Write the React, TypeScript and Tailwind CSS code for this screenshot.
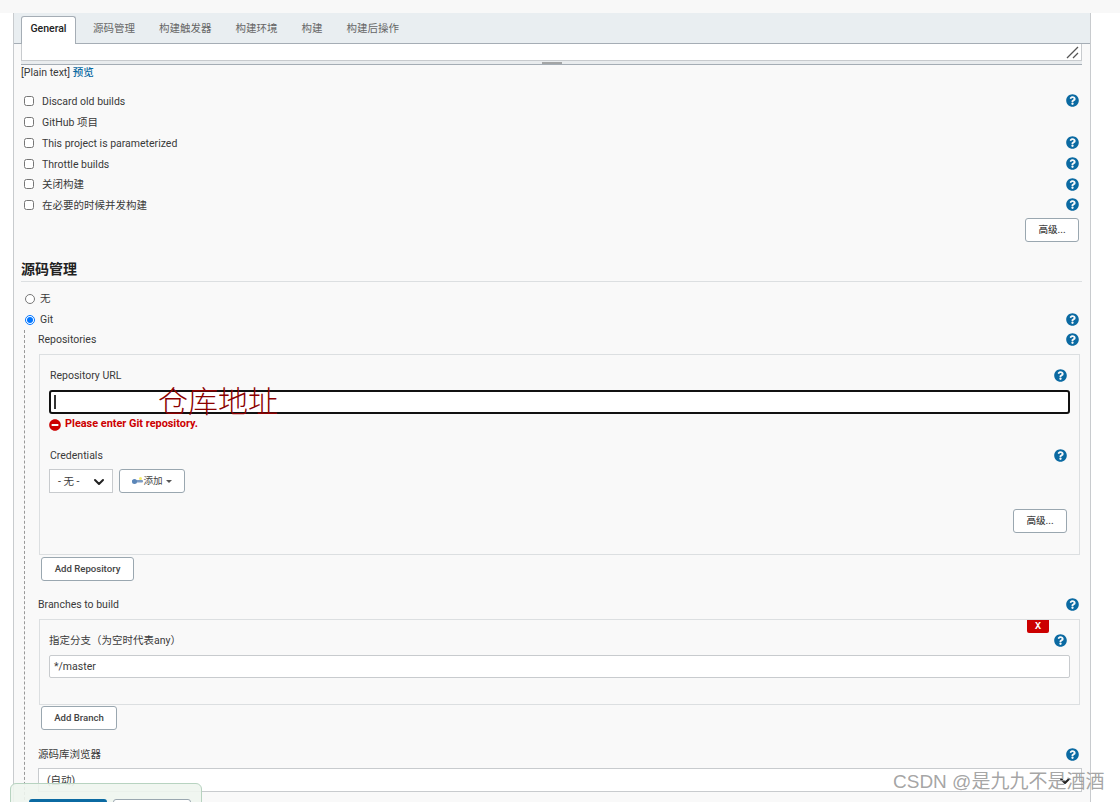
import { FaQuestionCircle, FaMinusCircle } from 'react-icons/fa'
import { ChevronDown } from 'lucide-react'

const tabs = ['源码管理', '构建触发器', '构建环境', '构建', '构建后操作']

function Help({ className = '' }: { className?: string }) {
  return <FaQuestionCircle className={`w-[13px] h-[13px] text-[#0b6aa2] shrink-0 ${className}`} />
}

function CheckRow({ label, help = true, h = 'h-[21px]' }: { label: string; help?: boolean; h?: string }) {
  return (
    <div className={`flex items-center justify-between pl-[3px] pr-[3px] ${h}`}>
      <label className="flex items-center gap-[8px]">
        <input type="checkbox" className="w-[10px] h-[10px] m-0 mb-[2px]" />
        <span>{label}</span>
      </label>
      {help && <Help className="mb-[2px]" />}
    </div>
  )
}

function Btn({ children, className = '' }: { children: React.ReactNode; className?: string }) {
  return (
    <button className={`h-[24px] bg-white border border-[#9aa7b0] rounded-[3px] text-[9.6px] font-medium text-[#444] ${className}`}>
      {children}
    </button>
  )
}

export default function App() {
  return (
    <div
      className="relative w-[1120px] h-[802px] overflow-hidden bg-white text-[10.5px] text-[#3a3a3a]"
      style={{ fontFamily: 'Roboto, "Noto Sans CJK SC", sans-serif' }}
    >
      <div className="h-[13px] bg-[#f8f8f8]" />
      <div className="ml-[13px] w-[1078px] h-[789px] border-x border-[#c8cbce] bg-[#f9f9f9]">
        {/* tabs */}
        <div className="flex h-[31px] pl-[7px] pt-[2px] items-end bg-[#e9eef1] border-b border-[#a5adb5]">
          <div className="relative top-px flex items-center justify-center w-[55px] h-[28px] pb-[3px] bg-white border border-b-0 border-[#a5adb5] rounded-t-[3px] font-medium text-[#222]">
            General
          </div>
          <div className="flex items-center h-[28px] pl-[17px] gap-[24px] text-[#666]">
            {tabs.map((t) => (
              <span key={t}>{t}</span>
            ))}
          </div>
        </div>

        <div className="pl-[7px] pr-[8px]">
          {/* description box */}
          <div className="h-[21px] bg-[#e9ecee] border-b border-[#a5adb5]">
            <div className="relative h-[17px] bg-white border-x border-b border-[#c8cbce]">
              <svg className="absolute right-[2px] bottom-[1px] w-[13px] h-[13px]" viewBox="0 0 13 13">
                <path d="M1 12 L12 1 M7 12 L12 7" stroke="#555" strokeWidth="1.3" fill="none" />
              </svg>
            </div>
            <div className="mx-auto mt-[1px] w-[20px] h-[2px] bg-[#a3a5a6]" />
          </div>
          <div className="h-[15px] leading-[15px]">
            [Plain text] <span className="text-[#0b6aa2] font-medium">预览</span>
          </div>

          <div className="mt-[11px]">
            <CheckRow label="Discard old builds" />
            <CheckRow label="GitHub 项目" help={false} />
            <CheckRow label="This project is parameterized" />
            <CheckRow label="Throttle builds" />
            <CheckRow label="关闭构建" h="h-[20px]" />
            <CheckRow label="在必要的时候并发构建" />
          </div>
          <div className="flex justify-end pr-[3px] mt-[2px]">
            <Btn className="w-[54px]">高级...</Btn>
          </div>

          {/* source */}
          <div className="h-[40px] pt-[17px] border-b border-[#dcdfe1] text-[14px] leading-[20px] font-bold text-[#222]">源码管理</div>
          <div className="flex items-center gap-[5px] pl-[4px] h-[21px] mt-[6px]">
            <input type="radio" className="w-[10px] h-[10px] m-0" />
            <span>无</span>
          </div>
          <div className="flex items-center justify-between pl-[4px] pr-[3px] h-[21px]">
            <div className="flex items-center gap-[5px]">
              <input type="radio" defaultChecked className="w-[10px] h-[10px] m-0" />
              <span>Git</span>
            </div>
            <Help />
          </div>

          <div className="ml-[3px] border-l border-dashed border-[#999] pl-[13px] h-[470px]">
            <div className="flex items-center justify-between pr-[3px] h-[19px]">
              <span>Repositories</span>
              <Help />
            </div>
            <div className="mt-[5px] ml-px h-[201px] w-[1041px] border border-[#dcdfe1] px-[9px] pt-[12px]">
              <div className="flex items-center justify-between pl-px pr-[3px] h-[17px]">
                <span>Repository URL</span>
                <Help />
              </div>
              <div className="mt-[6px] h-[24px] bg-white border-2 border-[#111] rounded-[3px] flex items-center pl-[3px]">
                <div className="w-[2px] h-[14px] bg-[#333]" />
              </div>
              <div className="flex items-center gap-[4px] h-[21px] text-[10.9px] font-bold text-[#cc0000]">
                <FaMinusCircle className="w-[12px] h-[12px]" />
                <span>Please enter Git repository.</span>
              </div>
              <div className="mt-[12px] flex items-center justify-between pl-px pr-[3px] h-[17px]">
                <span>Credentials</span>
                <Help />
              </div>
              <div className="mt-[5px] flex gap-[6px]">
                <div className="flex items-center justify-between w-[64px] h-[24px] pl-[8px] pr-[5px] pt-px bg-white border border-[#c8cbce]">
                  <span>- 无 -</span>
                  <ChevronDown className="w-[16px] h-[16px] text-[#222]" strokeWidth={3} />
                </div>
                <Btn className="w-[66px] flex items-center justify-center gap-0 font-normal">
                  <svg className="w-[11px] h-[8px]" viewBox="0 0 11 8">
                    <rect x="0" y="3" width="11" height="2.5" rx="1" fill="#7d9cc4" />
                    <circle cx="2.5" cy="4.5" r="2.5" fill="#5b86b8" />
                    <circle cx="8.5" cy="1.5" r="1.5" fill="#f4ec6a" />
                  </svg>
                  <span>添加</span>
                  <span className="ml-[3px] border-x-[3px] border-x-transparent border-t-[3px] border-t-[#555]" />
                </Btn>
              </div>
              <div className="flex justify-end pr-[3px] mt-[16px]">
                <Btn className="w-[54px]">高级...</Btn>
              </div>
            </div>
            <Btn className="block mt-[2px] ml-[3px] w-[93px]">Add Repository</Btn>

            <div className="mt-[14px] flex items-center justify-between pr-[3px] h-[19px]">
              <span>Branches to build</span>
              <Help />
            </div>
            <div className="relative mt-[5px] ml-px h-[86px] w-[1041px] border border-[#dcdfe1] px-[9px] pt-[12px]">
              <div
                className="absolute top-0 right-[30px] w-[22px] h-[13px] bg-[#cc0000] rounded-b-[2px] flex items-center justify-center text-white text-[10px] font-bold leading-none"
                style={{ fontFamily: '"Liberation Mono", monospace' }}
              >
                X
              </div>
              <div className="flex items-center justify-between h-[17px]">
                <span>指定分支（为空时代表any）</span>
                <span className="pr-[3px]">
                  <Help />
                </span>
              </div>
              <div className="mt-[6px] h-[23px] pt-px bg-white border border-[#c8cbce] rounded-[2px] flex items-center pl-[4px]">*/master</div>
            </div>
            <Btn className="block mt-[1px] ml-[3px] w-[76px]">Add Branch</Btn>

            <div className="mt-[15px] flex items-center justify-between pr-[3px] h-[19px]">
              <span>源码库浏览器</span>
              <Help />
            </div>
            <div className="mt-[4px] w-[1044px] h-[24px] pt-[2px] bg-white border border-[#c8cbce] flex items-center justify-between pl-[8px] pr-[8px]">
              <span>(自动)</span>
              <ChevronDown className="w-[16px] h-[16px] text-[#222]" strokeWidth={3} />
            </div>
          </div>
        </div>
      </div>

      {/* annotation written over the screenshot */}
      <div
        className="absolute left-[158px] top-[384px] text-[30px] leading-[36px] text-[#8b0000]"
        style={{ fontFamily: '"Liberation Serif", "Noto Sans CJK SC", serif', fontWeight: 300 }}
      >
        仓库地址
      </div>

      {/* sticky bottom bar */}
      <div className="absolute left-[10px] top-[783px] w-[192px] h-[30px] bg-[#eef5ee]/90 border border-[#b7d3c0] rounded-t-[6px] pl-[18px] pt-[15px] flex gap-[6px]">
        <div className="w-[78px] h-[20px] bg-[#0b6aa2] rounded-[3px]" />
        <div className="w-[78px] h-[20px] bg-white border border-[#9aa7b0] rounded-[3px]" />
      </div>

      {/* watermark */}
      <div
        className="absolute left-[893px] top-[768px] text-[19px] leading-[28px] text-[#9a9a9a]/90 whitespace-nowrap"
        style={{ fontFamily: '"Liberation Sans", "Noto Sans CJK SC", sans-serif' }}
      >
        CSDN @是九九不是酒酒
      </div>
    </div>
  )
}
